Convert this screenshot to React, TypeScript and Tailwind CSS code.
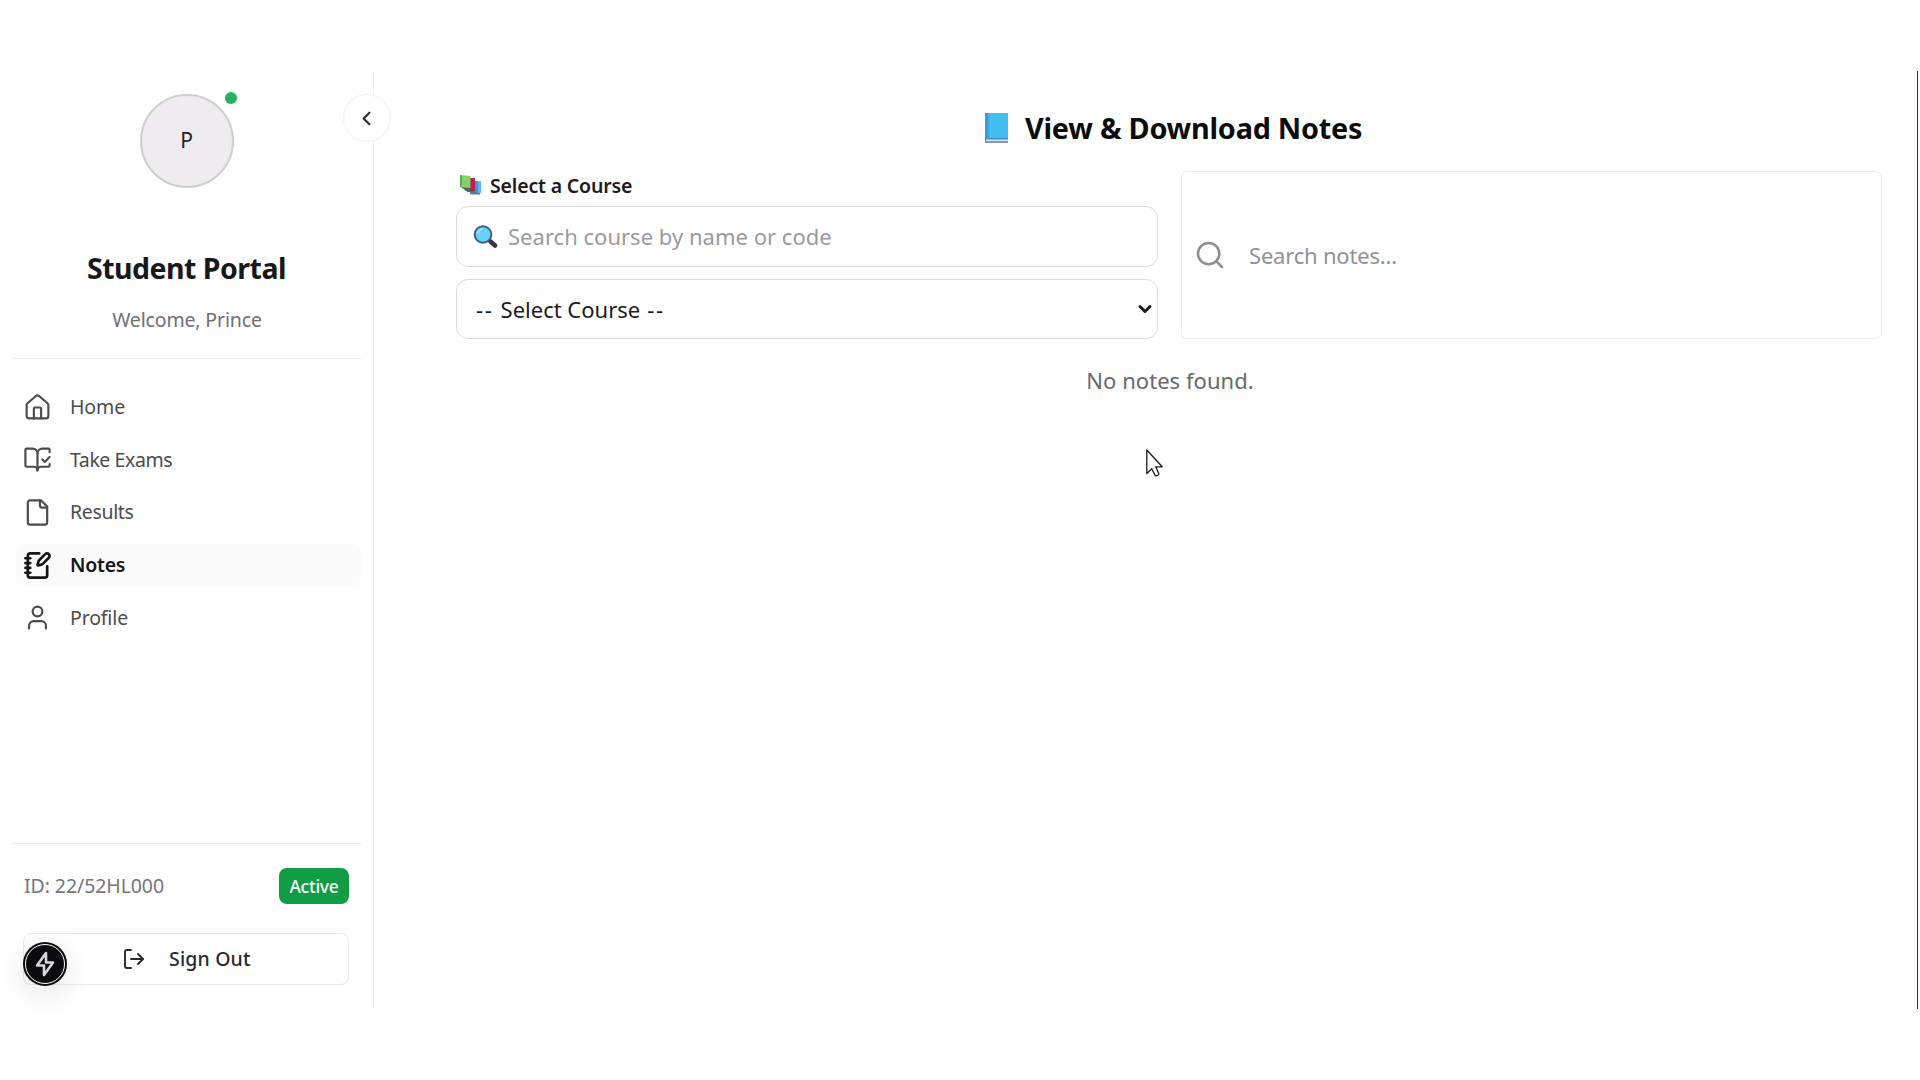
import type { ReactNode } from "react";
import { ChevronLeft, ChevronDown, House, LogOut, NotebookPen, Search, User, type LucideIcon } from "lucide-react";

function BookCheckIcon() {
  return (
    <svg viewBox="0 0 24 24" fill="none" stroke="currentColor" strokeWidth="1.8" strokeLinecap="round" strokeLinejoin="round" className="size-[29px]">
      <path d="M12 21V7" />
      <path d="m16 12 2 2 4-4" />
      <path d="M22 6V4a1 1 0 0 0-1-1h-5a4 4 0 0 0-4 4 4 4 0 0 0-4-4H3a1 1 0 0 0-1 1v13a1 1 0 0 0 1 1h6a3 3 0 0 1 3 3 3 3 0 0 1 3-3h6a1 1 0 0 0 1-1v-1.3" />
    </svg>
  );
}

function FileIcon() {
  return (
    <svg viewBox="0 0 24 24" fill="none" stroke="currentColor" strokeWidth="1.8" strokeLinecap="round" strokeLinejoin="round" className="size-[29px]">
      <path d="M15 2H6a2 2 0 0 0-2 2v16a2 2 0 0 0 2 2h12a2 2 0 0 0 2-2V7Z" />
      <path d="M14 2v4a2 2 0 0 0 2 2h4" />
    </svg>
  );
}

function lucide(Icon: LucideIcon, stroke: number) {
  return <Icon className="size-[29px]" strokeWidth={stroke} />;
}

function BlueBook() {
  return (
    <svg viewBox="0 0 23 30" className="h-[30px] w-[23px] shrink-0">
      <rect x="0" y="0" width="23" height="30" rx="1" fill="#3d8fca" />
      <rect x="1" y="26.500" width="22" height="1.500" fill="#d6e3ee" />
      <rect x="0" y="28" width="23" height="2" fill="#7f9dbb" />
      <rect x="0" y="0" width="3.500" height="26" fill="#3a9bd6" />
      <rect x="3.500" y="0" width="19.500" height="25" fill="#42bdee" />
    </svg>
  );
}

function BookStack() {
  return (
    <svg viewBox="0 0 21 20" className="h-5 w-[21px] shrink-0">
      <path d="M10 6h11v12l-11 1z" fill="#3f97d8" />
      <path d="M18 6h3v12h-3z" fill="#62b8ee" />
      <path d="M9 16l11 2v1.500H11z" fill="#5577a8" />
      <path d="M6 3h9v13l-8 1z" fill="#7c3550" />
      <path d="M10.500 3H15v12.500h-4.500z" fill="#c51d4b" />
      <path d="M0 11l11 2.500V16H6z" fill="#4f6659" />
      <path d="M0 0l10.500 1v12L0 12z" fill="#83d16c" />
      <path d="M0 0h2v12H0z" fill="#57b04c" />
    </svg>
  );
}

function Magnifier() {
  return (
    <svg viewBox="0 0 25 23" className="h-[23px] w-[25px] shrink-0">
      <path d="M15.500 14.500l3 2.500" stroke="#3b4a63" strokeWidth="3" />
      <path d="M17.500 16.500l4.500 4" stroke="#43303a" strokeWidth="4.500" strokeLinecap="round" />
      <circle cx="10" cy="9.500" r="8.300" fill="#67d0f7" stroke="#3f5f83" strokeWidth="2" />
      <path d="M5 8a5.500 5.500 0 0 1 4-4" stroke="#a5e8ff" strokeWidth="1.500" fill="none" strokeLinecap="round" />
    </svg>
  );
}

type NavEntry = { label: string; icon: ReactNode; text: string; active?: boolean };

const nav: NavEntry[] = [
  { label: "Home", icon: lucide(House, 1.8), text: "tracking-[-0.1px]" },
  { label: "Take Exams", icon: <BookCheckIcon />, text: "tracking-[-0.42px]" },
  { label: "Results", icon: <FileIcon />, text: "tracking-[-0.34px]" },
  { label: "Notes", icon: lucide(NotebookPen, 2.2), text: "tracking-[-0.24px] font-semibold", active: true },
  { label: "Profile", icon: lucide(User, 1.8), text: "tracking-[-0.15px]" },
];

function Sidebar() {
  return (
    <aside className="relative flex w-[374px] shrink-0 flex-col border-r border-[#ededed]">
      <button className="absolute top-[23px] left-[343px] flex size-[48px] items-center justify-center rounded-full border border-[#f0f0f0] bg-white text-[#333]">
        <ChevronLeft className="-ml-px size-[23px]" strokeWidth={2.4} />
      </button>

      <div className="mr-3 ml-3 flex h-[288px] flex-col items-center border-b border-[#ececec] pt-[23px]">
        <div className="relative">
          <div className="flex size-[94px] items-center justify-center rounded-full border-2 border-[#cfcece] bg-[#eeecee] text-[21px] text-[#222]">P</div>
          <span className="absolute -top-[2px] right-[-3px] size-3 rounded-full bg-[#22b35e]" />
        </div>
        <h2 className="mt-[60px] text-[28.5px] leading-[40px] font-bold tracking-[-0.52px] text-[#18181b]">Student Portal</h2>
        <p className="mt-4 pl-px text-[19.5px] leading-8 tracking-[-0.15px] text-[#6f6f75]">Welcome, Prince</p>
      </div>

      <nav className="mt-[27px] mr-3 ml-4 flex flex-col gap-[10.7px]">
        {nav.map((n) => (
          <a
            key={n.label}
            className={
              n.active
                ? "flex h-[42px] items-center gap-[18px] rounded-lg bg-[#fcfbfc] pl-[7px] text-[#161616]"
                : "flex h-[42px] items-center gap-[18px] pl-[7px] text-[#4b4b50]"
            }
          >
            {n.icon}
            <span className="text-[19.5px] leading-7">
              <span className={n.text}>{n.label}</span>
            </span>
          </a>
        ))}
      </nav>

      <div className="mt-auto mr-3 ml-3 h-[166px] border-t border-[#ebebeb] pr-[12px] pl-[11px]">
        <div className="mt-[24px] flex h-[36px] items-center justify-between">
          <span className="pl-px text-[19.5px] tracking-[-0.08px] text-[#75757a]">ID: 22/52HL000</span>
          <span className="flex h-[36px] w-[70px] items-center justify-center rounded-[8px] bg-[#109c45] pt-px text-[17.5px] font-medium tracking-[-0.25px] text-white">Active</span>
        </div>
        <button className="mt-[29px] flex h-[52px] w-full items-center rounded-lg border border-[#e8e8e8] pl-[98px] text-[#2a2a2d]">
          <LogOut className="size-[24px]" strokeWidth={1.9} />
          <span className="ml-[23px] text-[19.5px] font-medium tracking-[0.15px]">Sign Out</span>
        </button>
      </div>

      <div className="absolute top-[871px] left-[23px] flex size-[44px] items-center justify-center rounded-full bg-[#0b0b0d] p-[2px] shadow-[0_8px_24px_4px_rgba(0,0,0,0.07)]">
        <div className="flex size-full items-center justify-center rounded-full border-[1.5px] border-white">
          <svg viewBox="0 0 20 26" className="h-[26px] w-[20px]" fill="none" stroke="#d6d6d8" strokeWidth="2.600" strokeLinejoin="round">
            <path d="M11 2 2 14.500h7V24L18 11.500h-7z" />
          </svg>
        </div>
      </div>
    </aside>
  );
}

function Main() {
  return (
    <main className="flex flex-1 flex-col pr-[36px] pl-[82px]">
      <h1 className="mt-[38px] flex h-[38px] items-center pl-[529px] text-[28.8px] leading-[38px] font-bold tracking-[-0.23px] text-[#0c0c0c]">
        <BlueBook />
        <span className="ml-[17px]">View &amp; Download Notes</span>
      </h1>

      <div className="mt-[24px] flex gap-[23px]">
        <div className="flex w-[702px] flex-col">
          <label className="flex h-[28px] items-center pl-1 text-[19.5px] font-semibold tracking-[-0.17px] text-[#1c1c20]">
            <BookStack />
            <span className="ml-[9px] pt-px">Select a Course</span>
          </label>
          <div className="mt-[7px] flex h-[61px] items-center rounded-xl border border-[#dcdcde] pl-4 text-[22px] tracking-[0.02px] text-[#9a9a9e]">
            <Magnifier />
            <span className="ml-[10px]">Search course by name or code</span>
          </div>
          <div className="mt-[12px] flex h-[60px] items-center justify-between rounded-xl border border-[#dcdcde] pr-[2px] pl-[19px] text-[22px] text-[#1b1b1e]">
            <span className="flex">
              <span className="mr-[7px] tracking-[1.700px]">--</span>
              <span>Select Course</span>
              <span className="ml-[7px] tracking-[1.700px]">--</span>
            </span>
            <ChevronDown className="-mt-px size-[20px]" strokeWidth={3.6} />
          </div>
        </div>
        <div className="flex h-[168px] w-[701px] items-center rounded-md border border-[#ececec] pl-[12px]">
          <Search className="size-[32px] text-[#8f8f93]" strokeWidth={1.9} />
          <span className="ml-[23px] text-[22px] tracking-[-0.2px] text-[#929296]">Search notes...</span>
        </div>
      </div>

      <p className="mt-[24px] pl-[2px] text-center text-[22px] leading-[34px] tracking-[0.04px] text-[#68686d]">No notes found.</p>
    </main>
  );
}

export default function App() {
  return (
    <div className="h-[1080px] w-[1920px] overflow-hidden bg-[#fefefe] pt-[71px] font-['Noto_Sans',sans-serif]">
      <div className="relative flex h-[938px] w-[1918px] border-r-[1.5px] border-[#333]">
        <Sidebar />
        <Main />
        <svg viewBox="0 0 17 28" className="absolute top-[378px] left-[1146px] h-[28px] w-[17px]" fill="#fff" stroke="#1a1a1f" strokeWidth="1.3" strokeLinejoin="round">
          <path d="M.8 1v23.500l5-4.800 3.200 6.500c.8 1.200 4.400.2 3.800-1.700L9.800 17.800h6.400z" />
        </svg>
      </div>
    </div>
  );
}
